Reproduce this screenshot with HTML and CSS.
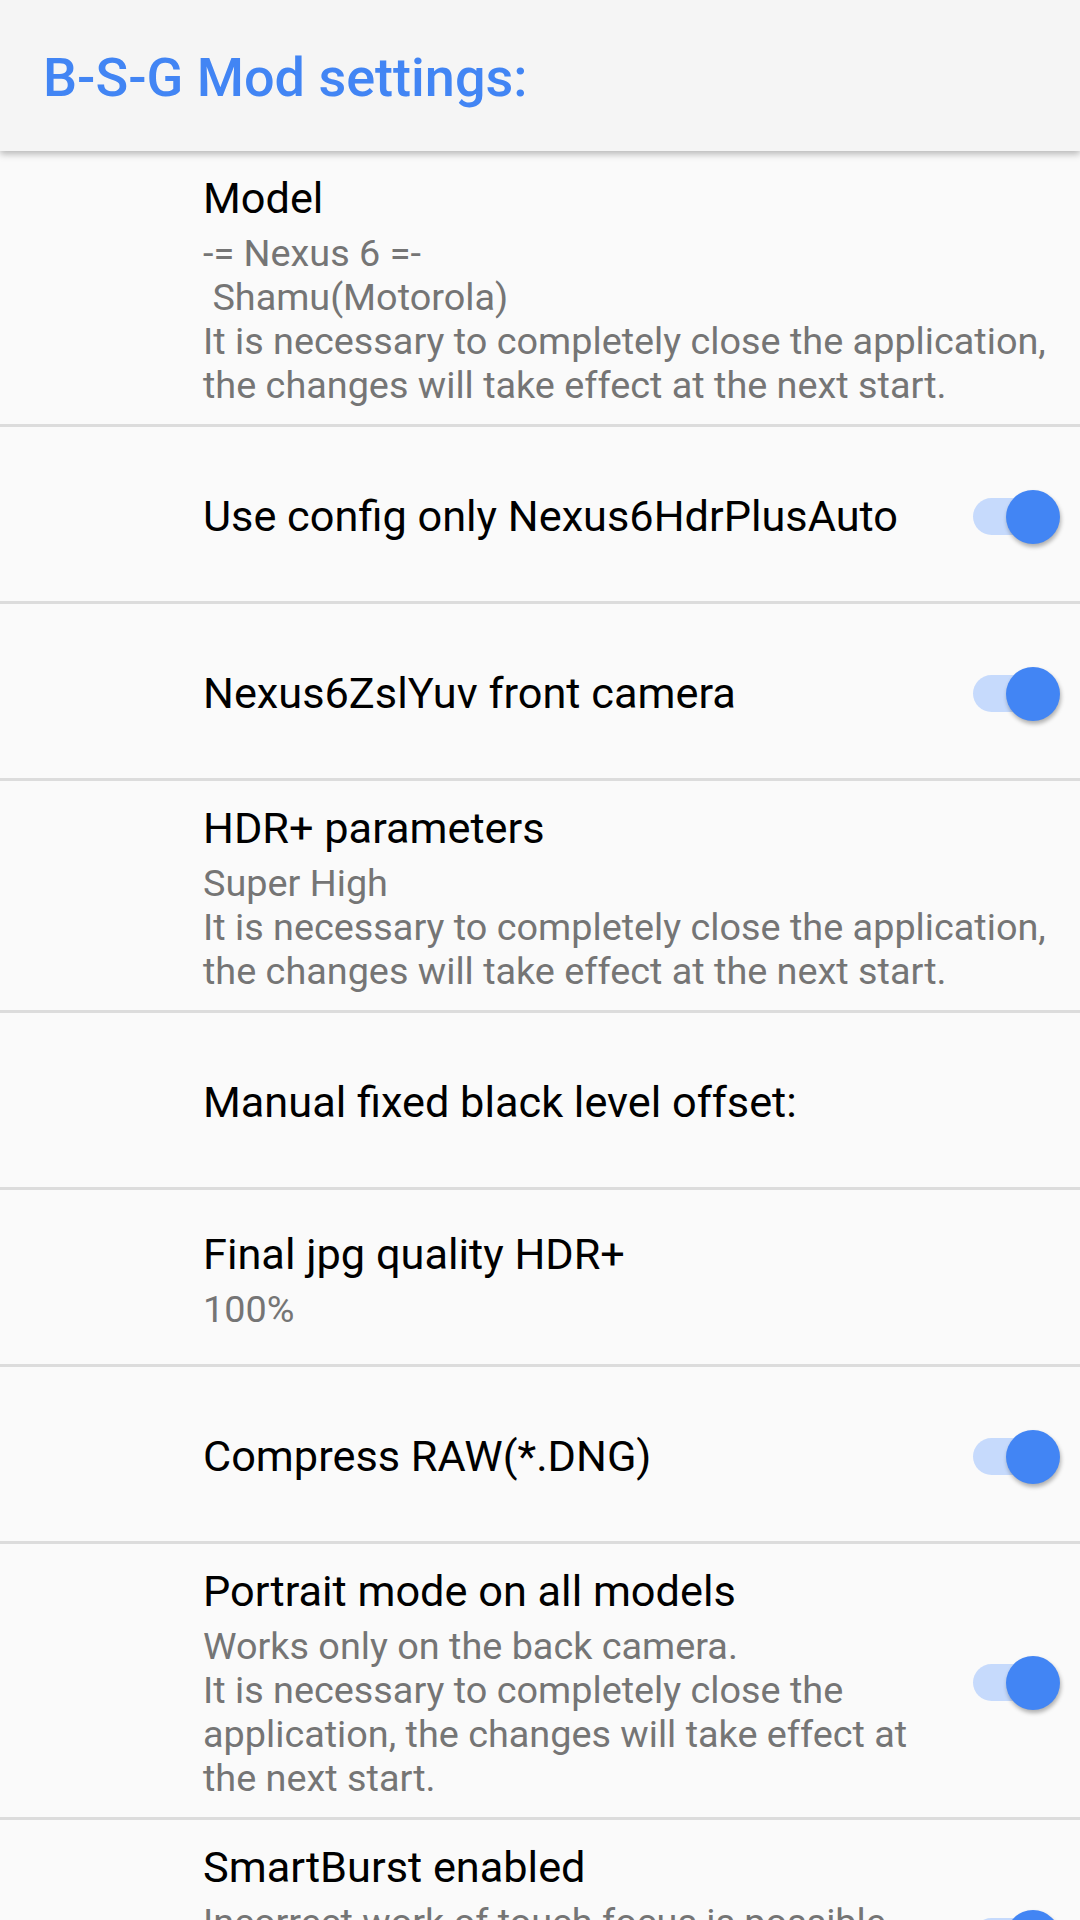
FILE: index.html
```html
<!DOCTYPE html>
<html>
<head>
    <title>B-S-G Mod settings</title>
    <link rel="stylesheet" href="styles.css">
</head>
<body>
    <div class="toolbar">
        <h1>B-S-G Mod settings:</h1>
    </div>

    <div class="prefs">
        <div class="pref">
            <div class="pref-text">
                <div class="pref-title">Model</div>
                <div class="pref-summary">-= Nexus 6 =-<br>&nbsp;Shamu(Motorola)<br>It is necessary to completely close the application, the changes will take effect at the next start.</div>
            </div>
        </div>

        <div class="pref">
            <div class="pref-text">
                <div class="pref-title">Use config only Nexus6HdrPlusAuto</div>
            </div>
            <div class="switch on"><span class="track"></span><span class="thumb"></span></div>
        </div>

        <div class="pref">
            <div class="pref-text">
                <div class="pref-title">Nexus6ZslYuv front camera</div>
            </div>
            <div class="switch on"><span class="track"></span><span class="thumb"></span></div>
        </div>

        <div class="pref">
            <div class="pref-text">
                <div class="pref-title">HDR+ parameters</div>
                <div class="pref-summary">Super High<br>It is necessary to completely close the application, the changes will take effect at the next start.</div>
            </div>
        </div>

        <div class="pref">
            <div class="pref-text">
                <div class="pref-title">Manual fixed black level offset:</div>
            </div>
        </div>

        <div class="pref">
            <div class="pref-text">
                <div class="pref-title">Final jpg quality HDR+</div>
                <div class="pref-summary">100%</div>
            </div>
        </div>

        <div class="pref">
            <div class="pref-text">
                <div class="pref-title">Compress RAW(*.DNG)</div>
            </div>
            <div class="switch on"><span class="track"></span><span class="thumb"></span></div>
        </div>

        <div class="pref">
            <div class="pref-text narrow">
                <div class="pref-title">Portrait mode on all models</div>
                <div class="pref-summary">Works only on the back camera.<br>It is necessary to completely close the application, the changes will take effect at the next start.</div>
            </div>
            <div class="switch on"><span class="track"></span><span class="thumb"></span></div>
        </div>

        <div class="pref">
            <div class="pref-text narrow">
                <div class="pref-title">SmartBurst enabled</div>
                <div class="pref-summary">Incorrect work of touch focus is possible<br>with some camera modes, the changes will take effect at the next start.</div>
            </div>
            <div class="switch on"><span class="track"></span><span class="thumb"></span></div>
        </div>
    </div>
</body>
</html>
```

FILE: styles.css
```css
html, body {
    margin: 0;
    padding: 0;
}
body {
    font-family: Roboto, "Noto Sans", sans-serif;
    background-color: #fafafa;
    width: 1080px;
    height: 1920px;
    overflow: hidden;
}
.toolbar {
    position: relative;
    z-index: 2;
    height: 151px;
    display: flex;
    align-items: center;
    padding: 4px 0 0 43px;
    box-sizing: border-box;
    background-color: #f5f5f5;
    box-shadow: 0 3px 7px rgba(0, 0, 0, 0.28);
}
.toolbar h1 {
    margin: 0;
    font-size: 54px;
    font-weight: 500;
    color: #4285f4;
}
.pref {
    display: flex;
    align-items: center;
    min-height: 177px;
    padding: 22px 20px 17px 203px;
    box-sizing: border-box;
    border-bottom: 3px solid #dcdcdc;
}
.pref-text {
    flex: 1;
    display: flex;
    flex-direction: column;
    gap: 7px;
}
.pref-text.narrow {
    flex: 0 0 735px;
    margin-right: auto;
}
.pref-title {
    font-size: 43.3px;
    color: #000;
}
.pref-summary {
    font-size: 37.8px;
    line-height: 44px;
    color: #757575;
}
.switch {
    position: relative;
    flex: 0 0 90px;
    height: 60px;
    margin-left: auto;
}
.switch .track {
    position: absolute;
    left: 3px;
    top: 11px;
    width: 74px;
    height: 37px;
    border-radius: 19px;
    background-color: #c6dafc;
}
.switch .thumb {
    position: absolute;
    right: 0;
    top: 3px;
    width: 54px;
    height: 54px;
    border-radius: 50%;
    background-color: #4285f4;
    box-shadow: 1px 3px 4px rgba(0, 0, 0, 0.3);
}
```
